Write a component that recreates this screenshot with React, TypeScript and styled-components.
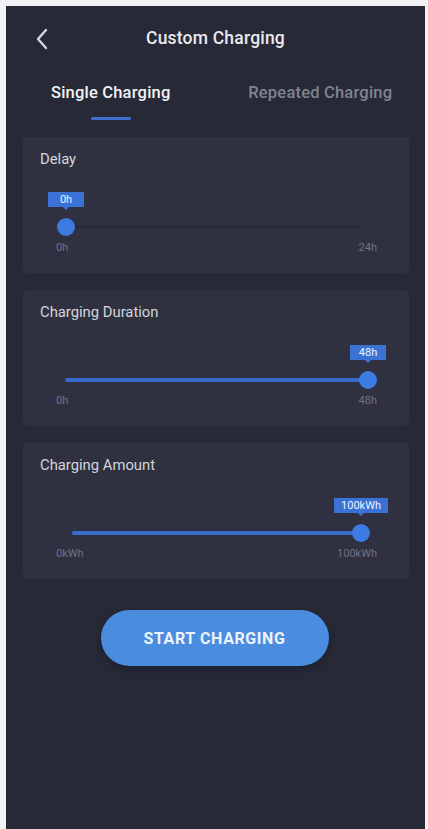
import React from "react";
import styled, { createGlobalStyle } from "styled-components";

const Global = createGlobalStyle`
  html, body { margin: 0; padding: 0; background: #f3f3f5; }
  body { padding: 6px 3px 0 6px; font-family: Roboto, "Noto Sans", "Liberation Sans", sans-serif; }
  * { box-sizing: border-box; }
`;

const Screen = styled.div`
  min-height: 823px;
  background: #272936;
  display: flex;
  flex-direction: column;
  color: #e4e6ec;
`;

const Header = styled.div`
  height: 64px;
  display: flex;
  align-items: center;
  justify-content: center;
  position: relative;
`;

const BackButton = styled.button`
  position: absolute;
  left: 24px;
  top: 21px;
  width: 24px;
  height: 24px;
  padding: 0;
  border: none;
  background: transparent;
  display: flex;
  align-items: center;
  justify-content: center;
`;

const Title = styled.h1`
  margin: 0;
  font-size: 17.5px;
  font-weight: 500;
  color: #e9eaef;
  letter-spacing: 0.2px;
`;

const Tabs = styled.div`
  display: grid;
  grid-template-columns: 1fr 1fr;
`;

const Tab = styled.div<{ $active?: boolean }>`
  display: flex;
  flex-direction: column;
  align-items: center;
  padding-top: 13px;
  font-size: 16.5px;
  line-height: 20px;
  font-weight: 500;
  letter-spacing: 0.2px;
  color: ${(p) => (p.$active ? "#f1f2f6" : "#80838f")};
`;

const Indicator = styled.div<{ $show?: boolean }>`
  margin-top: 14px;
  width: 40px;
  height: 3px;
  border-radius: 2px;
  background: ${(p) => (p.$show ? "#3c6fd0" : "transparent")};
`;

const Cards = styled.div`
  display: flex;
  flex-direction: column;
  gap: 17px;
  padding: 17px 16px 0 17px;
`;

const Card = styled.div`
  background: #2f3141;
  border-radius: 4px;
  padding: 14px 17px 18px;
  height: 136px;
`;

const CardTitle = styled.div`
  font-size: 14.8px;
  line-height: 16px;
  color: #d3d5dd;
`;

const SliderBox = styled.div`
  padding-top: 51px;
`;

const TrackRow = styled.div<{ $left: number; $right: number }>`
  height: 18px;
  margin: 0 ${(p) => p.$right}px 0 ${(p) => p.$left}px;
  position: relative;
  display: flex;
  align-items: center;
`;

const Rail = styled.div`
  flex: 1;
  height: 2px;
  background: #262834;
  position: relative;
`;

const Fill = styled.div`
  position: absolute;
  left: 0;
  top: -1px;
  height: 4px;
  border-radius: 2px;
  background: #3a6ccb;
`;

const Thumb = styled.div`
  position: absolute;
  top: 0;
  width: 18px;
  height: 18px;
  margin-left: -9px;
  border-radius: 50%;
  background: #3c7be2;
`;

const Bubble = styled.div`
  position: absolute;
  bottom: calc(100% + 11px);
  left: 50%;
  transform: translateX(-50%);
  height: 15px;
  padding: 0 7px;
  min-width: 36px;
  background: #3a72d6;
  color: #eef3ff;
  font-size: 11px;
  line-height: 15px;
  text-align: center;
  white-space: nowrap;
  &::after {
    content: "";
    position: absolute;
    left: 50%;
    top: 100%;
    margin-left: -3px;
    border: 3px solid transparent;
    border-top-color: #3a72d6;
  }
`;

const Labels = styled.div`
  margin-top: 5px;
  padding: 0 15px 0 16px;
  display: flex;
  justify-content: space-between;
  font-size: 11px;
  line-height: 14px;
  color: #6f7282;
`;

const ActionRow = styled.div`
  display: flex;
  justify-content: center;
  padding-top: 31px;
  padding-right: 2px;
`;

const StartButton = styled.button`
  width: 228px;
  height: 56px;
  border: none;
  border-radius: 28px;
  background: #4a8ddf;
  color: #eef3fb;
  font-family: Roboto, "Noto Sans", sans-serif;
  font-size: 16px;
  font-weight: 700;
  letter-spacing: 0.6px;
  box-shadow: 0 3px 6px rgba(10, 20, 40, 0.45);
`;

type SliderProps = {
  title: string;
  value: number;
  max: number;
  unit: string;
  left: number;
  right: number;
};

function SliderCard({ title, value, max, unit, left, right }: SliderProps) {
  const pct = (value / max) * 100;
  return (
    <Card>
      <CardTitle>{title}</CardTitle>
      <SliderBox>
        <TrackRow $left={left} $right={right}>
          <Rail>
            <Fill style={{ width: `${pct}%` }} />
          </Rail>
          <Thumb style={{ left: `${pct}%` }}>
            <Bubble>
              {value}
              {unit}
            </Bubble>
          </Thumb>
        </TrackRow>
        <Labels>
          <span>0{unit}</span>
          <span>
            {max}
            {unit}
          </span>
        </Labels>
      </SliderBox>
    </Card>
  );
}

export default function App() {
  return (
    <>
      <Global />
      <Screen>
        <Header>
          <BackButton aria-label="Back">
            <svg width="14" height="22" viewBox="0 0 14 22" fill="none">
              <path d="M11 2 L3 11 L11 20" stroke="#d4d6de" strokeWidth="2.4" strokeLinecap="round" strokeLinejoin="round" />
            </svg>
          </BackButton>
          <Title>Custom Charging</Title>
        </Header>
        <Tabs>
          <Tab $active>
            Single Charging
            <Indicator $show />
          </Tab>
          <Tab>
            Repeated Charging
            <Indicator />
          </Tab>
        </Tabs>
        <Cards>
          <SliderCard title="Delay" value={0} max={24} unit="h" left={26} right={32} />
          <SliderCard title="Charging Duration" value={48} max={48} unit="h" left={25} right={24} />
          <SliderCard title="Charging Amount" value={100} max={100} unit="kWh" left={32} right={31} />
        </Cards>
        <ActionRow>
          <StartButton>START CHARGING</StartButton>
        </ActionRow>
      </Screen>
    </>
  );
}
